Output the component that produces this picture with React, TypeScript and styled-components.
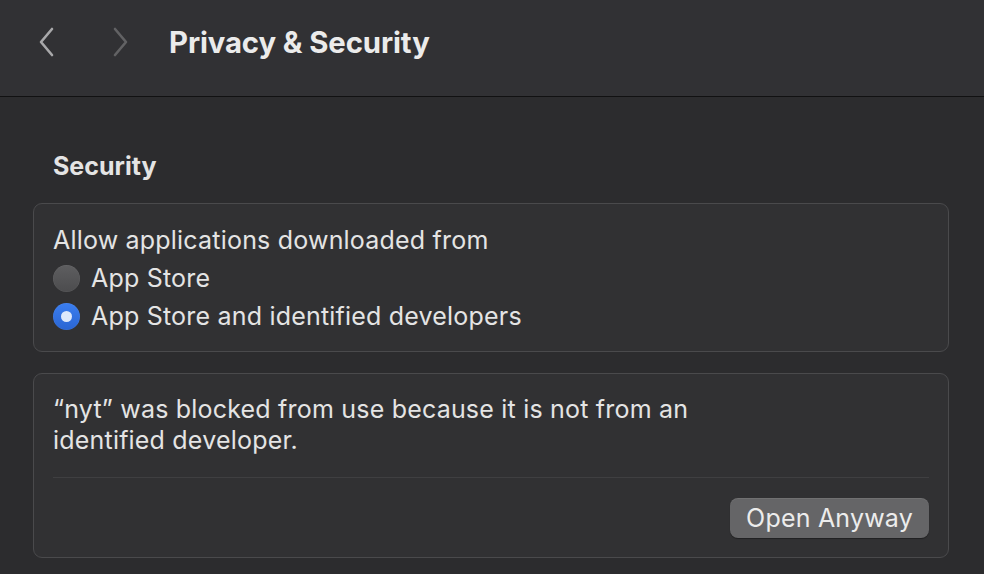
import React from "react";
import styled, { createGlobalStyle } from "styled-components";

const Global = createGlobalStyle`
  html, body { margin: 0; padding: 0; background: #2c2c2e; }
  body { font-family: Inter, "Noto Sans", "Liberation Sans", sans-serif; color: #e6e6e6; -webkit-font-smoothing: antialiased; }
`;

const Window = styled.div`
  width: 984px;
  height: 574px;
  background: #2c2c2e;
  overflow: hidden;
  display: flex;
  flex-direction: column;
`;

const TitleBar = styled.header`
  height: 97px;
  flex: none;
  background: #313134;
  border-bottom: 1.5px solid #111112;
  display: flex;
  align-items: center;
  padding: 0 0 12px 35px;
  box-sizing: border-box;
`;

const NavButton = styled.button<{ $dim?: boolean }>`
  background: none;
  border: none;
  padding: 0;
  width: 24px;
  height: 32px;
  margin-right: ${(p) => (p.$dim ? "37px" : "49px")};
  color: ${(p) => (p.$dim ? "#626264" : "#a8a8aa")};
  display: flex;
  align-items: center;
  justify-content: center;
`;

const Title = styled.h1`
  margin: 0;
  font-size: 29.3px;
  font-weight: 700;
  letter-spacing: -0.1px;
  color: #ebebeb;
`;

const Content = styled.main`
  padding: 54px 35px 0 33px;
  display: flex;
  flex-direction: column;
`;

const SectionTitle = styled.h2`
  margin: 0 0 22px 20px;
  font-size: 25px;
  font-weight: 700;
  line-height: 30px;
  color: #e4e4e4;
`;

const Card = styled.section<{ $bottom?: number }>`
  background: #313133;
  border: 1.5px solid #4a4a4c;
  border-radius: 9px;
  padding: 17px 19px ${(p) => p.$bottom ?? 16}px 19px;
  display: flex;
  flex-direction: column;
  margin-bottom: 21px;
`;

const textStyle = `
  font-size: 25px;
  letter-spacing: 0.2px;
  color: #e4e4e4;
`;

const Label = styled.div`
  ${textStyle}
  line-height: 38px;
`;

const RadioRow = styled.label`
  ${textStyle}
  display: flex;
  align-items: center;
  gap: 11px;
  height: 38px;
`;

const RadioDot = styled.span<{ $on?: boolean }>`
  width: 27px;
  height: 27px;
  border-radius: 50%;
  flex: none;
  display: flex;
  align-items: center;
  justify-content: center;
  background: ${(p) =>
    p.$on
      ? "linear-gradient(#3b7ef0, #2a65d2)"
      : "linear-gradient(#5e5e60, #4c4c4e)"};
  box-shadow: inset 0 0 0 0.5px rgba(255, 255, 255, 0.08);
  &::after {
    content: "";
    display: ${(p) => (p.$on ? "block" : "none")};
    width: 11px;
    height: 11px;
    border-radius: 50%;
    background: #dde8fb;
  }
`;

const Message = styled.p`
  ${textStyle}
  margin: 0;
  padding-top: 3px;
  line-height: 31px;
  max-width: 700px;
`;

const Separator = styled.hr`
  border: none;
  height: 1px;
  background: #3f3f41;
  margin: 21px 0 20px 0;
  width: 100%;
`;

const ButtonRow = styled.div`
  display: flex;
  justify-content: flex-end;
`;

const PushButton = styled.button`
  height: 40px;
  padding: 0 16px;
  border: none;
  border-radius: 8px;
  background: #656567;
  box-shadow: 0 1px 1px rgba(0, 0, 0, 0.35), inset 0 1px 0 rgba(255, 255, 255, 0.08);
  color: #ececec;
  font-family: inherit;
  font-size: 25px;
  letter-spacing: 0.2px;
`;

const Chevron = ({ dir }: { dir: "left" | "right" }) => (
  <svg width="20" height="30" viewBox="0 0 20 30" fill="none">
    <path
      d={dir === "left" ? "M15 2 L4 15 L15 28" : "M5 2 L16 15 L5 28"}
      stroke="currentColor"
      strokeWidth="2.6"
      strokeLinecap="round"
      strokeLinejoin="round"
    />
  </svg>
);

export default function App() {
  return (
    <>
      <Global />
      <Window>
        <TitleBar>
          <NavButton aria-label="Back">
            <Chevron dir="left" />
          </NavButton>
          <NavButton $dim aria-label="Forward">
            <Chevron dir="right" />
          </NavButton>
          <Title>Privacy &amp; Security</Title>
        </TitleBar>
        <Content>
          <SectionTitle>Security</SectionTitle>
          <Card>
            <Label>Allow applications downloaded from</Label>
            <RadioRow>
              <RadioDot />
              App Store
            </RadioRow>
            <RadioRow>
              <RadioDot $on />
              App Store and identified developers
            </RadioRow>
          </Card>
          <Card $bottom={19}>
            <Message>
              “nyt” was blocked from use because it is not from an identified developer.
            </Message>
            <Separator />
            <ButtonRow>
              <PushButton>Open Anyway</PushButton>
            </ButtonRow>
          </Card>
        </Content>
      </Window>
    </>
  );
}
